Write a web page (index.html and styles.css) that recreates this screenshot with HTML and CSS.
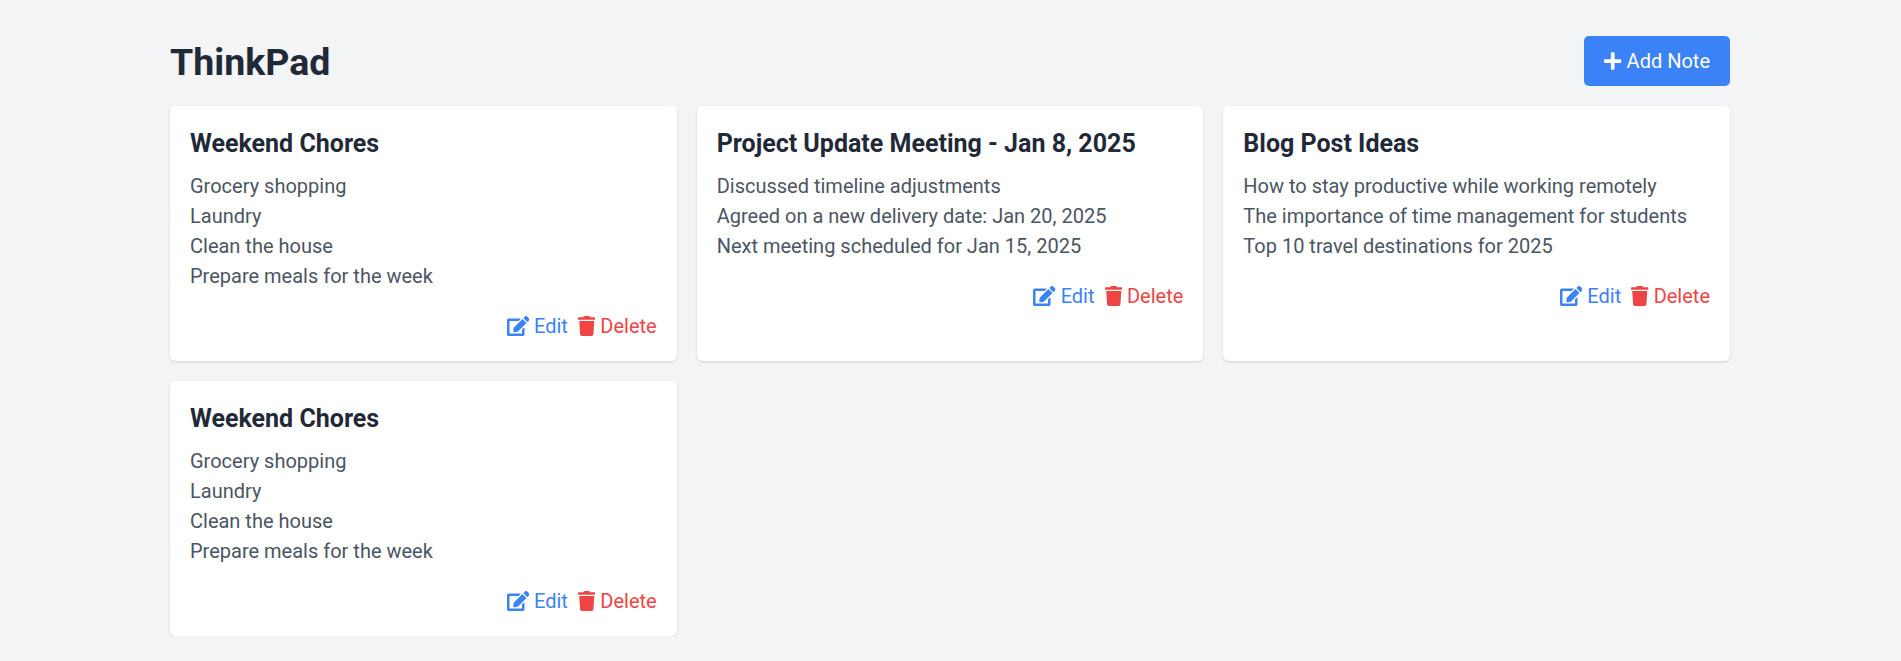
FILE: index.html
```html
<!DOCTYPE html>
<html lang="en">
<head>
<meta charset="utf-8">
<title>ThinkPad</title>
<link rel="stylesheet" href="styles.css">
</head>
<body>
<svg class="sprite" aria-hidden="true">
  <symbol id="plus" viewBox="0 0 448 512"><path d="M416 208H272V64c0-17.67-14.33-32-32-32h-32c-17.67 0-32 14.33-32 32v144H32c-17.67 0-32 14.33-32 32v32c0 17.67 14.33 32 32 32h144v144c0 17.67 14.33 32 32 32h32c17.67 0 32-14.33 32-32V304h144c17.67 0 32-14.33 32-32v-32c0-17.67-14.33-32-32-32z"/></symbol>
  <symbol id="edit" viewBox="0 0 576 512"><path d="M402.6 83.2l90.2 90.2c3.8 3.8 3.8 10 0 13.8L274.4 405.6l-92.8 10.3c-12.4 1.4-22.9-9.1-21.5-21.5l10.3-92.8L388.8 83.2c3.8-3.8 10-3.8 13.8 0zm162-22.9l-48.8-48.8c-15.2-15.2-39.9-15.2-55.2 0l-35.4 35.4c-3.8 3.8-3.8 10 0 13.8l90.2 90.2c3.8 3.8 10 3.8 13.8 0l35.4-35.4c15.2-15.3 15.2-40 0-55.2zM384 346.2V448H64V128h229.8c3.2 0 6.2-1.3 8.5-3.5l40-40c7.6-7.6 2.2-20.5-8.5-20.5H48C21.5 64 0 85.5 0 112v352c0 26.5 21.5 48 48 48h352c26.5 0 48-21.5 48-48V306.2c0-10.7-12.9-16-20.5-8.5l-40 40c-2.2 2.3-3.5 5.3-3.5 8.5z"/></symbol>
  <symbol id="trash" viewBox="0 0 448 512"><path d="M432 32H312l-9.4-18.7A24 24 0 0 0 281.1 0H166.8a23.72 23.72 0 0 0-21.4 13.3L136 32H16A16 16 0 0 0 0 48v32a16 16 0 0 0 16 16h416a16 16 0 0 0 16-16V48a16 16 0 0 0-16-16zM53.2 467a48 48 0 0 0 47.9 45h245.8a48 48 0 0 0 47.9-45L416 128H32z"/></symbol>
</svg>
<main class="container">
  <header class="header">
    <h1 class="brand">ThinkPad</h1>
    <button class="add"><svg class="icon"><use href="#plus"/></svg> Add Note</button>
  </header>
  <section class="notes">
    <article class="note">
      <h2 class="note-title">Weekend Chores</h2>
      <p class="note-text">Grocery shopping<br>Laundry<br>Clean the house<br>Prepare meals for the week</p>
      <div class="actions">
        <button class="action edit"><svg class="icon wide"><use href="#edit"/></svg> Edit</button>
        <button class="action delete"><svg class="icon"><use href="#trash"/></svg> Delete</button>
      </div>
    </article>
    <article class="note">
      <h2 class="note-title">Project Update Meeting - Jan 8, 2025</h2>
      <p class="note-text">Discussed timeline adjustments<br>Agreed on a new delivery date: Jan 20, 2025<br>Next meeting scheduled for Jan 15, 2025</p>
      <div class="actions">
        <button class="action edit"><svg class="icon wide"><use href="#edit"/></svg> Edit</button>
        <button class="action delete"><svg class="icon"><use href="#trash"/></svg> Delete</button>
      </div>
    </article>
    <article class="note">
      <h2 class="note-title">Blog Post Ideas</h2>
      <p class="note-text">How to stay productive while working remotely<br>The importance of time management for students<br>Top 10 travel destinations for 2025</p>
      <div class="actions">
        <button class="action edit"><svg class="icon wide"><use href="#edit"/></svg> Edit</button>
        <button class="action delete"><svg class="icon"><use href="#trash"/></svg> Delete</button>
      </div>
    </article>
    <article class="note">
      <h2 class="note-title">Weekend Chores</h2>
      <p class="note-text">Grocery shopping<br>Laundry<br>Clean the house<br>Prepare meals for the week</p>
      <div class="actions">
        <button class="action edit"><svg class="icon wide"><use href="#edit"/></svg> Edit</button>
        <button class="action delete"><svg class="icon"><use href="#trash"/></svg> Delete</button>
      </div>
    </article>
  </section>
</main>
</body>
</html>
```
FILE: styles.css
```css
* {
  box-sizing: border-box;
  margin: 0;
  padding: 0;
}

body {
  width: 1900px;
  background: #f3f4f6;
  color: #1f2937;
  font: 20px/30px Roboto, sans-serif;
}

.sprite {
  display: none;
}

.container {
  width: 1600px;
  margin: 0 auto;
  padding: 36px 20px 0;
}

.header {
  display: flex;
  justify-content: space-between;
  align-items: center;
  margin-bottom: 20px;
}

.brand {
  padding-top: 2px;
  font-size: 37.5px;
  line-height: 45px;
  font-weight: 700;
}

button {
  border: 0;
  background: none;
  font: inherit;
  color: inherit;
}

.add {
  padding: 10px 20px;
  border-radius: 5px;
  background: #3b82f6;
  color: #fff;
}

.icon {
  display: inline-block;
  width: 17.5px;
  height: 20px;
  fill: currentColor;
  vertical-align: -2.5px;
}

.icon.wide {
  width: 22.5px;
}

.notes {
  display: grid;
  grid-template-columns: repeat(3, 1fr);
  gap: 20px;
}

.note {
  padding: 20px;
  border-radius: 5px;
  background: #fff;
  box-shadow: 0 1px 3px rgba(0, 0, 0, 0.1), 0 1px 2px rgba(0, 0, 0, 0.06);
}

.note-title {
  margin-bottom: 10px;
  font-size: 25px;
  line-height: 35px;
  font-weight: 700;
}

.note-text {
  color: #4b5563;
}

.actions {
  display: flex;
  justify-content: flex-end;
  gap: 10px;
  margin-top: 20px;
}

.edit {
  color: #3b82f6;
}

.delete {
  color: #ef4444;
}
```
